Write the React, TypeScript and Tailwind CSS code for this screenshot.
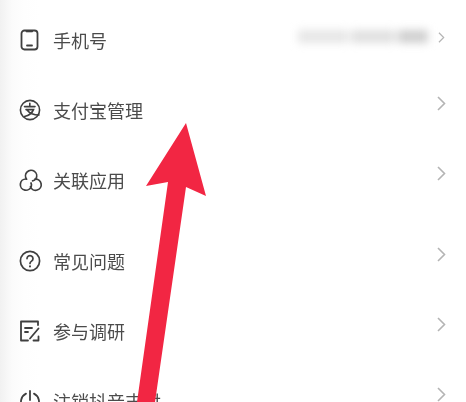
const PhoneIcon = () => (
  <svg width="22" height="22" viewBox="0 0 22 22" fill="none" stroke="#3f3f3f" strokeWidth="1.8" strokeLinecap="round">
    <rect x="2.5" y="1.5" width="16" height="19" rx="3" />
    <path d="M7.5 2h6v.8h-6z" fill="#3f3f3f" strokeWidth="1" />
    <path d="M8 16.5h5" />
  </svg>
)

const AlipayIcon = () => (
  <svg width="22" height="22" viewBox="0 0 22 22" fill="none" stroke="#3f3f3f" strokeWidth="1.6" strokeLinecap="round">
    <circle cx="11" cy="11" r="9.6" />
    <path d="M5.5 7.6h10.5M10.8 4.2v3.4M7 10.6h7.5c-1.4 3.6-4.6 5.8-9 7M8 11c2.6 3.4 6.6 5 12 5" />
  </svg>
)

const LinkIcon = () => (
  <svg width="24" height="24" viewBox="0 0 24 24" fill="none" stroke="#3f3f3f" strokeWidth="1.7" strokeLinecap="round">
    <path d="M7.6 11.2A5.6 5.6 0 1 1 17 10.6c-.8 1.2-2 2-3.4 2.3" />
    <path d="M6.9 11a5.6 5.6 0 1 0 5.4 7.2c.3-1 .2-2.2-.3-3.2" />
    <path d="M16 11.1a5.6 5.6 0 1 1-4.6 7.6" />
  </svg>
)

const QuestionIcon = () => (
  <svg width="22" height="22" viewBox="0 0 22 22" fill="none" stroke="#3f3f3f" strokeWidth="1.7" strokeLinecap="round">
    <circle cx="11" cy="11" r="9.6" />
    <path d="M8 8.6a3 3 0 1 1 4.6 2.5c-1 .7-1.6 1.2-1.6 2.3" />
    <path d="M11 16.2v.2" strokeWidth="2" />
  </svg>
)

const SurveyIcon = () => (
  <svg width="22" height="22" viewBox="0 0 22 22" fill="none" stroke="#3f3f3f" strokeWidth="1.8" strokeLinecap="round" strokeLinejoin="round">
    <path d="M19 5V1.5H2v19h7" />
    <path d="M6 8h7M6 12h3" />
    <path d="M19.5 8.5L11 18.5M14.5 20.5h5V16.5" />
  </svg>
)

const PowerIcon = () => (
  <svg width="22" height="22" viewBox="0 0 22 22" fill="none" stroke="#3f3f3f" strokeWidth="1.8" strokeLinecap="round">
    <path d="M7 3.6a9 9 0 1 0 8 0" />
    <path d="M11 1v9" />
  </svg>
)

const Chevron = ({ small }: { small?: boolean }) => (
  <svg
    className={small ? 'mb-[6px] mr-[1px]' : 'mb-[14px]'}
    width={small ? 7 : 9}
    height={small ? 11 : 15}
    viewBox="0 0 9 15"
    fill="none"
    stroke="#b4b4b4"
    strokeWidth="1.6"
  >
    <path d="M1 1l6.5 6.5L1 14" />
  </svg>
)

function Row({ icon, label, phone }: { icon: React.ReactNode; label: string; phone?: boolean }) {
  return (
    <div className="flex h-[70px] items-center pl-[19px] pr-[20px]">
      <div className="flex w-[34px] shrink-0 items-center">{icon}</div>
      <span className="flex-1 text-[18px] text-[#4b4b4b]">{label}</span>
      {phone && (
        <div className="mb-[8px] mr-[10px] flex h-[13px] w-[130px] gap-[3px] blur-[4px]">
          <div className="w-[50px] bg-[#e6e6e6]" />
          <div className="w-[44px] bg-[#e0e0e0]" />
          <div className="w-[30px] bg-[#cfcfcf]" />
        </div>
      )}
      <Chevron small={phone} />
    </div>
  )
}

export default function App() {
  return (
    <div className="relative h-[402px] w-[466px] overflow-hidden bg-[linear-gradient(to_right,#f1f1f1,#fbfbfb_12px,#fefefe_24px,#ffffff_40px)] font-['Noto_Sans_CJK_SC','Noto_Sans',sans-serif]">
      <div className="pt-[5px] blur-[0.5px]">
        <Row icon={<PhoneIcon />} label="手机号" phone />
        <Row icon={<AlipayIcon />} label="支付宝管理" />
        <Row icon={<LinkIcon />} label="关联应用" />
        <div className="mt-[11px]">
          <Row icon={<QuestionIcon />} label="常见问题" />
          <Row icon={<SurveyIcon />} label="参与调研" />
          <Row icon={<PowerIcon />} label="注销抖音支付" />
        </div>
      </div>

      {/* annotation arrow over the list */}
      <svg className="absolute left-0 top-0" width="466" height="402" viewBox="0 0 466 402">
        <polygon points="186,123 206,196 186,187 155,402 137,402 168,182 146,186" fill="#f22643" />
      </svg>
    </div>
  )
}
